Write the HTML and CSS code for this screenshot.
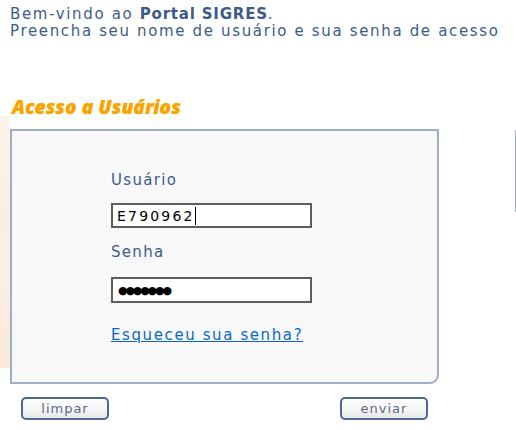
FILE: index.html
```html
<!DOCTYPE html>
<html lang="pt">
<head>
<meta charset="utf-8">
<link rel="stylesheet" href="styles.css">
</head>
<body>
<div class="page">
  <div class="intro">
    <div>Bem-vindo ao <b>Portal SIGRES</b>.</div>
    <div>Preencha seu nome de usuário e sua senha de acesso</div>
  </div>
  <div class="main">
    <div class="side"></div>
    <div class="content">
      <h2 class="title">Acesso a Usuários</h2>
      <div class="panel">
        <form class="form">
          <label class="label">Usuário</label>
          <div class="input"><span class="val">E790962</span><span class="caret"></span></div>
          <label class="label label2">Senha</label>
          <div class="input pass"><span class="dots">●●●●●●●</span></div>
          <a class="link" href="#">Esqueceu sua senha?</a>
        </form>
      </div>
      <div class="buttons">
        <button class="btn" type="button">limpar</button>
        <button class="btn" type="button">enviar</button>
      </div>
    </div>
    <div class="rline"></div>
  </div>
</div>
</body>
</html>
```
FILE: styles.css
```css
html, body { margin: 0; padding: 0; background: #fff; }
body { font-family: "DejaVu Sans", Verdana, sans-serif; color: #3d5a8a; width: 516px; height: 430px; overflow: hidden; }
.page { position: relative; }
.intro { padding: 6px 0 0 10px; font-size: 15px; line-height: 17px; letter-spacing: 1.65px; }
.intro b { font-weight: bold; letter-spacing: 0.8px; }
.main { display: flex; margin-top: 56px; }
.side { width: 10px; margin-top: 20px; height: 252px; background: linear-gradient(180deg, #fdf4ea 0%, #f7efe6 40%, #f9f0e6 60%, #fbe9d8 100%); flex: none; }
.content { width: 429px; flex: none; }
.title { margin: 0 0 11px 2px; font-family: "Open Sans", "DejaVu Sans", sans-serif; font-size: 19px; line-height: 22px; font-weight: 800; font-style: italic; color: #f9a400; text-shadow: 0 0 1px #fcc15a; letter-spacing: 0.1px; }
.panel { border: 2px solid #9dadc6; border-radius: 0 0 9px 0; background: #f8f8f8; box-sizing: border-box; height: 255px; }
.form { display: flex; flex-direction: column; align-items: flex-start; padding: 40px 0 0 99px; }
.label { font-size: 15px; line-height: 18px; color: #3d5a8a; letter-spacing: 1.3px; }
.label2 { margin-top: 15px; }
.input { margin-top: 14px; width: 201px; height: 25px; box-sizing: border-box; border: 2px solid #615c57; background: #fff; display: flex; align-items: center; padding-left: 4px; font-size: 14px; color: #000; letter-spacing: 2.2px; }
.input.pass { margin-top: 16px; height: 26px; }
.caret { width: 1px; height: 18px; background: #000; }
.pass { letter-spacing: -2.2px; font-size: 11px; }
.dots { padding-left: 1px; }
.link { margin-top: 23px; font-size: 15px; line-height: 18px; color: #0a66c8; text-decoration: underline; letter-spacing: 1.6px; }
.buttons { display: flex; justify-content: space-between; padding: 13px 11px 0 11px; }
.btn { width: 88px; height: 23px; box-sizing: border-box; border: 2px solid #4d6894; border-radius: 5px; background: linear-gradient(180deg, #ffffff 0%, #f4f4f4 60%, #e6e6e6 100%); font-family: "DejaVu Sans", sans-serif; font-size: 13px; color: #566b8f; letter-spacing: 1px; padding: 0; line-height: 18px; }
.rline { width: 2px; height: 82px; margin: 34px 0 0 76px; background: #9dadc6; }
```
